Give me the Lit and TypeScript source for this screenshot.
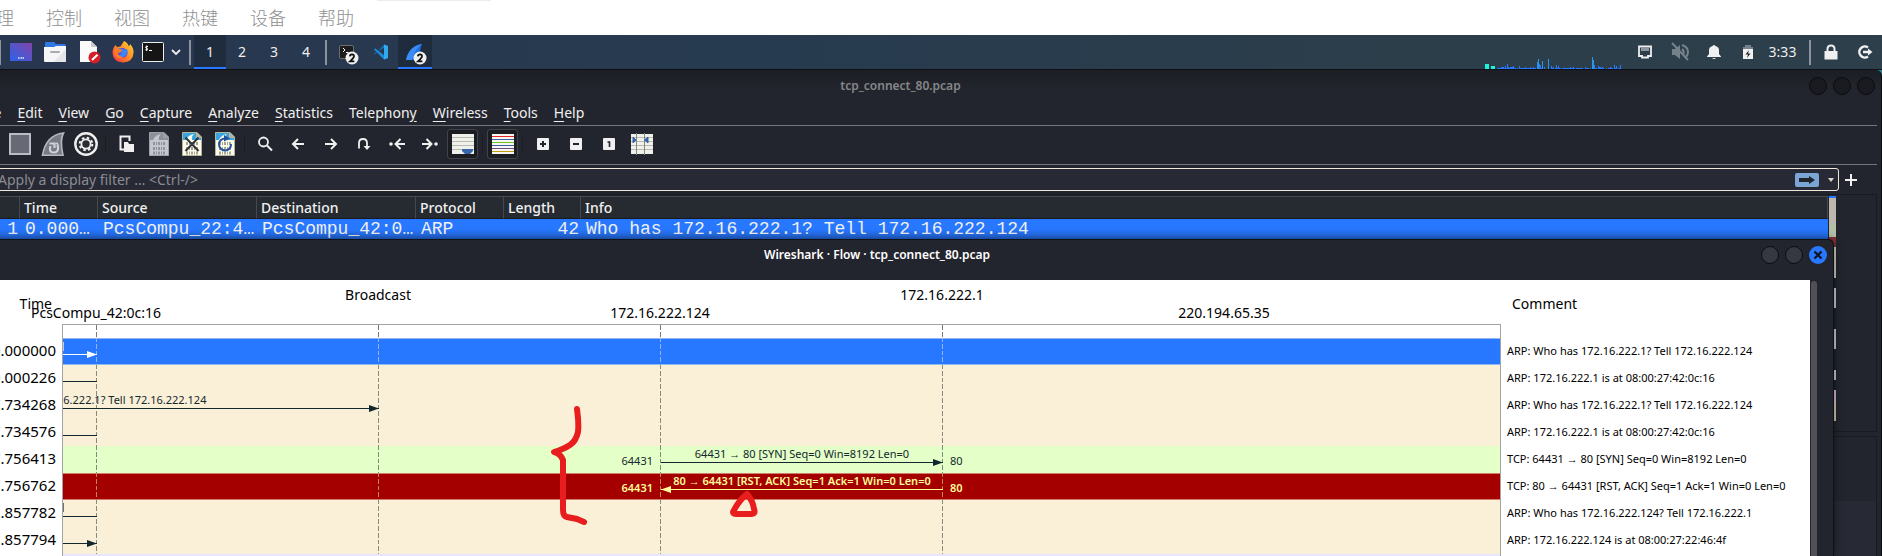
import { LitElement, html, css, svg } from "lit";
import { customElement } from "lit/decorators.js";
import { classMap } from "lit/directives/class-map.js";

/* ---------- icons ---------- */
const icon = (w: number, h: number, body: unknown) =>
  html`<svg width=${w} height=${h} viewBox="0 0 ${w} ${h}" fill="none" overflow="visible" aria-hidden="true">${body}</svg>`;

const bits = (c: string) => svg`<g stroke=${c} stroke-width="3" stroke-dasharray="2 1 1 1 2 1 1 1">
  <path d="M4 11.500H16M4 16.500H16M4 21H16"/></g>`;
const sheet = (fill: string, top: string, edge: string) => svg`
  <path d="M.5.500H15L19.500 5V23.500H.5Z" fill=${fill} stroke=${edge}/>
  <path d="M1 1H14.500L16 5 19 6V8H10L9 6 7 8H1Z" fill=${top}/>
  <path d="M4 8Q6 3 12 2 9 5 10 8Z" fill=${fill}/>
  <path d="M14.500 1V5.500H19.500Z" stroke=${edge} fill=${edge}/>`;
const badge2 = svg`<circle cx="17" cy="16" r="6.500" fill="#f0f0f0"/>
  <path d="M14.800 14.300Q15 12.300 17 12.300 19.200 12.400 19 14.500 18.600 16.300 15 19.300H19.400" stroke="#111" stroke-width="1.700"/>`;

const I = {
  desktop: icon(24, 24, svg`<defs><linearGradient id="dg" x1="0" y1="1" x2="1" y2="0"><stop stop-color="#2a63ea"/><stop offset="1" stop-color="#8244a8"/></linearGradient></defs>
    <rect x="1" y="3" width="22" height="18" rx="1" fill="url(#dg)"/><path d="M9 18H11M11.500 18H13M13.500 18H15.500" stroke="#e8e8ff" stroke-width="1.500" stroke-dasharray="1.500 .5"/>`),
  folder: icon(24, 24, svg`<path d="M2 9V3Q2 2 3 2H11Q12 2 12.500 4H21.500Q22.500 4 22.500 5V9Z" fill="#2f77e6"/>
    <path d="M1 7H11L13 6H23V21Q23 22 22 22H2Q1 22 1 21Z" fill="#f5f5f7"/><path d="M23 9L11 22H22Q23 22 23 21Z" fill="#e4e4e8"/><path d="M8 12H16" stroke="#aaa" stroke-width="2" stroke-linecap="round"/>`),
  doc: icon(24, 24, svg`<path d="M3 1H14L20 7V22H3Z" fill="#fafafa"/><path d="M14 1V7H20Z" fill="#c9c9cc"/>
    <circle cx="17.500" cy="17.500" r="6" fill="#d42127"/><path d="M15 20L20.500 14.800" stroke="#fff" stroke-width="2"/>`),
  firefox: icon(24, 24, svg`<defs><linearGradient id="ff" x1="1" y1="0" x2="0" y2="1"><stop stop-color="#ffd93c"/><stop offset=".5" stop-color="#ff8a25"/><stop offset="1" stop-color="#f0264f"/></linearGradient></defs>
    <path d="M13 1Q17 3 17.500 6 19 6 19 4 23 8 22.500 13 22 22 12 22.500 2 22 1.500 13 1.500 8 4.500 5L6 7 9.500 6.500Q11 4 13 1Z" fill="url(#ff)"/>
    <circle cx="11.500" cy="13" r="5" fill="#7a42c9"/><path d="M7 12Q6 8 9 8 12 10 16 9 18 13 14 16 10 19 7 15 10 15 11 13Z" fill="#3a86f5"/>
    <path d="M4 8Q7 8 11 10 10 13 6.500 13 8 17 13 17 6 21 3 14Z" fill="#ff7a22"/>`),
  terminal: icon(24, 24, svg`<rect x="1.500" y="2.500" width="21" height="19" rx="1" fill="#151515" stroke="#f0f0f0"/>
    <path d="M7 6.500Q4.500 6 4.500 7.300 5 8.300 6.500 8.700 7 10.500 4.300 9.800M5.700 5.500V11M8 10.500H11" stroke="#fff"/>`),
  chevron: icon(12, 12, svg`<path d="M2 4L6 8 10 4" stroke="#eee" stroke-width="1.800"/>`),
  termSmall: icon(26, 24, svg`<g transform="translate(4 2)"><rect x="1.500" y="3.500" width="14" height="13" rx="1.500" fill="#1d1d1f" stroke="#6c6c70"/><path d="M5 6L7 8 5 10M8 10.500H10.500" stroke="#fff"/><g transform="translate(-3 0)">${badge2}</g></g>`),
  vscode: icon(18, 18, svg`<path d="M12 1.500L16 3V15L12 16.500 2 6.500 3 5.300 12 12Z" fill="#1b8ad6"/><path d="M12 1.500L3 11.500 2 10.500 12 5Z" fill="#1072b4"/><path d="M12 1.500L16 3V15L12 16.500Z" fill="#33a9f2"/>`),
  shark: icon(24, 24, svg`<g transform="translate(0 2)"><path d="M3 18Q6 4 19 2 16 8 17 18Z" fill="#1c6fe8"/><path d="M3 18Q6 4 19 2 11 8 9 18Z" fill="#3b8cf5"/>${badge2}</g>`),
  net: icon(16, 16, svg`<path d="M2 2.500H14V12H11V13.500H5V12H2Z" stroke="#eee" stroke-width="1.800"/><path d="M5 4V7M7 4V7M9 4V7M11 4V7" stroke="#eee"/>`),
  mute: icon(20, 20, svg`<path d="M2 7H5L10 3V17L5 13H2Z" fill="#76828b"/><path d="M12 3Q18 5 18 10 18 13 16 15M12 7Q14.500 9 13.500 12M2 1L18 18" stroke="#76828b" stroke-width="2"/>`),
  bell: icon(16, 16, svg`<path d="M1 12.500L3 10V6Q3 3 6.500 2 8 0 9.500 2 13 3 13 6V10L15 12.500V13H1ZM6 14H10Q8 16 6 14Z" fill="#f0f0f0"/>`),
  battery: icon(12, 16, svg`<path d="M3 1H9V3H11V5H1V3H3Z" fill="#76828b"/><path d="M1 5H11V15H1Z" fill="#f0f0f0"/><path d="M7 6L3.500 10.500H6L5 14 8.500 9.500H6Z" fill="#222"/>`),
  lock: icon(14, 16, svg`<path d="M.5 7H13.500V15.500H.5Z" fill="#f0f0f0"/><path d="M3.500 8V5Q3.500 1.500 7 1.500T10.500 5V8" stroke="#f0f0f0" stroke-width="2"/>`),
  logout: icon(16, 16, svg`<path d="M11 3.500A5.500 5.500 0 1 0 11 12.500M6 8H13" stroke="#f0f0f0" stroke-width="2.400"/><path d="M11 4.500L15.500 8 11 11.500Z" fill="#f0f0f0"/>`),
  stop: icon(22, 22, svg`<rect x="1" y="1" width="20" height="20" fill="#676a74" stroke="#b9bcc5" stroke-width="2"/>`),
  fin: icon(24, 24, svg`<path d="M1.500 23.200Q5 3 22.500 1 18.500 8 22 23.200Z" fill="#777b85" stroke="#b4b7bf" stroke-width="1.600"/><path d="M8.500 11.500H13.500V16M9.500 14Q7.500 20.500 12.500 20.500T17 15.500 15.500 12" stroke="#d0d2d8" stroke-width="2.200"/>`),
  gear: icon(24, 24, svg`<circle cx="12" cy="12" r="10.700" fill="#2a2c33" stroke="#f0f0ee" stroke-width="2.400"/><circle cx="12" cy="12" r="4.600" stroke="#f0f0ee" stroke-width="1.800"/><circle cx="12" cy="12" r="6.300" stroke="#f0f0ee" stroke-width="2" stroke-dasharray="2.500 2.450"/>`),
  open: icon(16, 18, svg`<path d="M6 14.500H2.500V1.500H11.500V6" stroke="#f0f0f0" stroke-width="2"/><path d="M6 7H10L11 9H16V17H6Z" fill="#f0f0f0"/>`),
  save: icon(20, 24, svg`${sheet("#c3c6cd", "#8d9099", "#9da0a8")}${bits("#8f929a")}`),
  close: icon(20, 24, svg`${sheet("#fdfcea", "#38a4e0", "#b5b49f")}${bits("#a5a594")}<path d="M3.500 5.500L16.500 19M16.500 5.500L3.500 19" stroke="#2d3339" stroke-width="2"/>`),
  reload: icon(20, 24, svg`${sheet("#fdfcea", "#38a4e0", "#b5b49f")}${bits("#a5a594")}<path d="M10.500 6.500A6 6 0 1 0 16 12" stroke="#25539b" stroke-width="2"/><path d="M9 3L15 6.500 9 9.500Z" fill="#25539b"/>`),
  search: icon(16, 16, svg`<circle cx="6.500" cy="6" r="4.500" stroke="#f0f0f0" stroke-width="1.800"/><path d="M10 9.500L15 14.500" stroke="#f0f0f0" stroke-width="2"/>`),
  left: icon(14, 14, svg`<path d="M13 7H2.500M7 2L2 7 7 12" stroke="#f0f0f0" stroke-width="2"/>`),
  right: icon(14, 14, svg`<path d="M1 7H11.500M7 2L12 7 7 12" stroke="#f0f0f0" stroke-width="2"/>`),
  jump: icon(14, 14, svg`<path d="M2 11.500V6Q2 2 6 2T10 6V10" stroke="#f0f0f0" stroke-width="1.800"/><path d="M6.500 9H13.500L10 13Z" fill="#f0f0f0"/>`),
  first: icon(18, 14, svg`<circle cx="3" cy="7" r="1.800" fill="#f0f0f0"/><path d="M17 7H8.500M12.500 2L7.500 7 12.500 12" stroke="#f0f0f0" stroke-width="2"/>`),
  last: icon(18, 14, svg`<circle cx="15" cy="7" r="1.800" fill="#f0f0f0"/><path d="M1 7H9.500M5.500 2L10.500 7 5.500 12" stroke="#f0f0f0" stroke-width="2"/>`),
  scroll: icon(22, 20, svg`<rect width="22" height="20" fill="#f1f1ec"/><path d="M0 3.500H22M0 7.500H22M0 11.500H22M0 15.500H22" stroke="#b9bab4"/><path d="M10 15H21V17L18 20H13L10 17Z" fill="#3566a8"/>`),
  colors: icon(22, 20, svg`<rect width="22" height="20" fill="#f6f6f2"/><path d="M0 2.500H22" stroke="#e8262a"/><path d="M0 5.500H22" stroke="#3d5f9f"/><path d="M0 8.500H22" stroke="#6cc61a"/><path d="M0 11.500H22" stroke="#3d5f9f"/><path d="M0 14.500H22" stroke="#6f4a7e"/><path d="M0 17.500H22" stroke="#c39a12"/>`),
  zoomIn: icon(12, 12, svg`<rect width="12" height="12" rx="1" fill="#f0f0f0"/><path d="M3 6H9M6 3V9" stroke="#22242c" stroke-width="2"/>`),
  zoomOut: icon(12, 12, svg`<rect width="12" height="12" rx="1" fill="#f0f0f0"/><path d="M3 6H9" stroke="#22242c" stroke-width="2"/>`),
  zoomOne: icon(12, 12, svg`<rect width="12" height="12" rx="1" fill="#f0f0f0"/><path d="M4.500 4H6.500V9" stroke="#22242c" stroke-width="1.600"/>`),
  cols: icon(22, 22, svg`<rect y="1" width="22" height="20" fill="#f1f1ec"/><path d="M0 4.500H22M0 8.500H22M0 12.500H22M0 16.500H22" stroke="#b9bab4"/><path d="M5.500 0V22M13.500 0V22" stroke="#858680"/><path d="M2 4L5 7 2 10ZM17 4L13.500 7 17 10Z" fill="#3566a8" stroke="#3566a8"/>`),
  apply: icon(24, 14, svg`<rect width="24" height="14" rx="2" fill="#7aa5d4"/><path d="M4 5H14V3L20 7 14 11V9H4Z" fill="#20242c"/>`),
  caret: icon(8, 6, svg`<path d="M1 1H7L4 5Z" fill="#d8d8d2"/>`),
  plus: icon(14, 14, svg`<path d="M1 7H13M7 1V13" stroke="#f0f0f0" stroke-width="2"/>`),
  x: icon(18, 18, svg`<path d="M5.500 5.500L12.500 12.500M12.500 5.500L5.500 12.500" stroke="#0e1420" stroke-width="2.200"/>`),
};

/* ---------- host and desktop bars ---------- */
@customElement("host-menu")
class HostMenu extends LitElement {
  static styles = css`
    :host { display: block; background: #fff; overflow: hidden; }
    .bar { display: flex; gap: 32px; height: 35px; box-sizing: border-box; margin-left: -22px; padding-bottom: 2px; align-items: center; }
    .item { all: unset; font: 300 18px/26px "Noto Sans CJK SC", sans-serif; color: #8f8f8f; white-space: nowrap; }
  `;
  render() {
    return html`<nav class="bar">
      ${["管理", "控制", "视图", "热键", "设备", "帮助"].map((t) => html`<button class="item">${t}</button>`)}
    </nav>`;
  }
}

@customElement("desktop-panel")
class DesktopPanel extends LitElement {
  static styles = css`
    :host { display: block; font-family: "Noto Sans", sans-serif; }
    .bar { display: flex; height: 34px; background: linear-gradient(90deg, #28364f, #273b50 40%, #2c3e4a 75%, #2d3f4b); border-bottom: 1px solid #0e1015; align-items: stretch; }
    .btn { all: unset; box-sizing: border-box; width: 34px; display: flex; align-items: center; justify-content: center; color: #eee; font-size: 14px; }
    .space { width: 32px; padding-bottom: 2px; }
    .slim { width: 26px; }
    .chev { width: 20px; }
    .on { background: #1f2c3d; border-bottom: 2px solid #2777ff; padding-top: 2px; }
    .sep { width: 2px; height: 25px; margin: 5px 3px 0; background: #8b939c; }
    .edge { margin-left: 0; width: 1px; }
    .grow { flex: 1; }
    .graph { align-self: flex-end; margin-right: 2px; display: block; }
    .clock { width: 35px; padding-bottom: 2px; display: flex; align-items: center; justify-content: center; font-size: 14px; color: #eee; }
    .wide { width: 36px; }
    .gap { margin-left: 9px; margin-right: 3px; }
  `;
  render() {
    const bars = [1,1,1,1,2,2,2,1,3,1,5,2,1,2,2,2,3,1,1,0,1,0,3,1,1,1,1,1,2,1,1,1,1,2,1,1,2,1,1,0,7,10,5,4,1,8,0,2,0,0,0,10,0,0,3,1,2,0,1,4,1,3,1,1,0,1,1,1,1,1,1,1,1,2,1,1,2,1,0,1,1,1,1,1,1,1,0,0,2,1,1,1,0,1,0,12,9,4,1,1,0,3,2,2,1,2,1,0,0,1,0,1,1,2,1,1,0,4,1,3,0,1,1,4];
    return html`<div class="bar">
      <span class="sep edge"></span>
      <button class="btn" aria-label="Show desktop">${I.desktop}</button>
      <button class="btn" aria-label="Files">${I.folder}</button>
      <button class="btn" aria-label="Editor">${I.doc}</button>
      <button class="btn" aria-label="Firefox">${I.firefox}</button>
      <button class="btn slim" aria-label="Terminal">${I.terminal}</button>
      <button class="btn chev" aria-label="More terminals">${I.chevron}</button>
      <span class="sep"></span>
      ${[1, 2, 3, 4].map((n) => html`<button class=${classMap({ btn: true, space: true, on: n === 1 })}>${n}</button>`)}
      <span class="sep"></span>
      <button class="btn" aria-label="Terminal windows">${I.termSmall}</button>
      <button class="btn" aria-label="Code">${I.vscode}</button>
      <button class="btn on" aria-label="Wireshark windows">${I.shark}</button>
      <span class="grow"></span>
      <svg class="graph" width="140" height="16" aria-hidden="true">
        <path d="M0 11H4V16H0ZM6 13H10V16H6Z" fill="#1cf3dc"/>
        ${bars.map((v, i) => (v ? svg`<rect x=${12 + i} y=${16 - v} width="1" height=${v} fill=${v > 5 ? "#2b96e8" : "#2777ff"}/>` : ""))}
      </svg>
      <button class="btn wide" aria-label="Network">${I.net}</button>
      <button class="btn" aria-label="Volume muted">${I.mute}</button>
      <button class="btn" aria-label="Notifications">${I.bell}</button>
      <button class="btn" aria-label="Battery">${I.battery}</button>
      <span class="clock">3:33</span>
      <span class="sep gap"></span>
      <button class="btn" aria-label="Lock">${I.lock}</button>
      <button class="btn" aria-label="Log out">${I.logout}</button>
    </div>`;
  }
}

/* ---------- main capture window ---------- */
@customElement("capture-window")
class CaptureWindow extends LitElement {
  static styles = css`
    :host { display: flex; flex-direction: column; flex: 1; font-family: "Noto Sans", sans-serif; color: #f0f0f0; background: linear-gradient(#1c1e24, #23252e 20px); margin-left: -80px; border-right: 1px solid #0d0e12; border-radius: 0 6px 0 0; }
    .title { display: grid; grid-template-columns: 1fr auto 1fr; align-items: center; height: 32px; padding: 0 6px; }
    .name { grid-column: 2; font: 600 12px/18px "Noto Sans", sans-serif; color: #868789; }
    .dots { justify-self: end; display: flex; gap: 6px; }
    .dot { all: unset; box-sizing: border-box; width: 18px; height: 18px; border-radius: 50%; background: #1a1b20; border: 1px solid #0b0c0f; }
    .menu { display: flex; height: 21px; padding: 0 0 2px 59px; gap: 16px; align-items: center; border-bottom: 1px solid #75757d; margin-right: 4px; }
    .entry { all: unset; font-size: 14px; line-height: 20px; white-space: nowrap; }
    u { text-underline-offset: 3px; }
    .tools { display: flex; height: 36px; padding: 0 0 2px 83px; align-items: center; border-bottom: 1px solid #75757d; margin-right: 4px; }
    .tool { all: unset; box-sizing: border-box; width: 33px; height: 30px; display: flex; align-items: center; justify-content: center; }
    .pressed { width: 31px; margin: 0 1px; border: 1px solid #41434b; border-radius: 3px; background: #1b1d22; }
    .split { width: 1px; height: 18px; margin: 0 3px; background: #1c1d24; }
    .filter { display: flex; align-items: center; gap: 5px; padding: 3px 23px 0 0; }
    .box { flex: 1; display: flex; align-items: center; height: 23px; box-sizing: border-box; border: 1px solid #efe9dc; border-radius: 3px; background: #272935; padding: 0 3px 0 77px; gap: 8px; }
    .field { all: unset; flex: 1; font-size: 14px; }
    .field::placeholder { color: #8b8c91; }
    .small { all: unset; display: flex; }
    .list { display: flex; height: 236px; margin: 3px 4px 0 0; border: solid #1a1b20; border-width: 1px 1px 1px 0; }
    .scroll { flex: 1; padding-top: 1px; }
    table { border-collapse: separate; border-spacing: 0; table-layout: fixed; width: 100%; }
    .c1 { width: 100px; } .c2 { width: 78px; } .c3 { width: 159px; } .c4 { width: 88px; } .c5 { width: 77px; }
    th { box-sizing: border-box; height: 23px; padding: 0 0 0 4px; text-align: left; font: 500 14px/20px "Noto Sans", sans-serif; background: linear-gradient(#272b32, #252a31); border-top: 1px solid #46484e; border-right: 1px solid #46484e; border-bottom: 1px solid #181a1f; }
    td { height: 20px; padding: 0 0 0 5px; font: 18px/20px "Liberation Mono", monospace; white-space: nowrap; overflow: hidden; }
    .row { background: linear-gradient(#2777ff 50%, #2268dd); }
    .num { text-align: right; padding: 0 2px 0 0; }
    .map { width: 7px; margin: 1px 40px 0 1px; }
    .seg { display: block; }
    .details { flex: 1; margin: 4px 4px 0 0; border: solid #1a1b20; border-width: 1px 1px 0 0; background: linear-gradient(#23252e 64px, #272935 64px); }
  `;
  render() {
    const menus = [["", "F", "ile"], ["", "E", "dit"], ["", "V", "iew"], ["", "G", "o"], ["", "C", "apture"], ["", "A", "nalyze"], ["", "S", "tatistics"], ["Telephon", "y", ""], ["", "W", "ireless"], ["", "T", "ools"], ["", "H", "elp"]];
    const tool = (label: string, pic: unknown, pressed = false) =>
      html`<button class=${classMap({ tool: true, pressed })} aria-label=${label}>${pic}</button>`;
    const split = html`<span class="split"></span>`;
    const map: [number, string][] = [[2, "#2777ff"], [27, "#bdb8ae"], [12, "#b2c0a6"], [10, "#863136"], [31, "#d3cdc4"], [10, "#14242a"], [20, "#cccce4"], [21, "#14242a"], [20, "#cccce4"], [21, "#14242a"], [10, "#cccce4"], [10, "#14242a"], [12, "#d9bbdc"], [19, "#d6cdb8"]];
    return html`
      <header class="title"><span class="name">tcp_connect_80.pcap</span>
        <span class="dots"><button class="dot" aria-label="Minimize"></button><button class="dot" aria-label="Maximize"></button><button class="dot" aria-label="Close"></button></span>
      </header>
      <nav class="menu">${menus.map(([a, b, c]) => html`<button class="entry">${a}<u>${b}</u>${c}</button>`)}</nav>
      <div class="tools">
        ${tool("Stop", I.stop)}${tool("Restart", I.fin)}${tool("Options", I.gear)}${split}
        ${tool("Open", I.open)}${tool("Save", I.save)}${tool("Close file", I.close)}${tool("Reload", I.reload)}${split}
        ${tool("Find", I.search)}${tool("Back", I.left)}${tool("Forward", I.right)}${tool("Go to packet", I.jump)}${tool("First", I.first)}${tool("Last", I.last)}
        ${tool("Auto scroll", I.scroll, true)}${split}${tool("Colorize", I.colors, true)}${split}
        ${tool("Zoom in", I.zoomIn)}${tool("Zoom out", I.zoomOut)}${tool("Normal size", I.zoomOne)}${tool("Resize columns", I.cols)}
      </div>
      <div class="filter">
        <div class="box"><input class="field" aria-label="Display filter" placeholder="Apply a display filter … &lt;Ctrl-/&gt;">
          <button class="small" aria-label="Apply">${I.apply}</button><button class="small" aria-label="History">${I.caret}</button></div>
        <button class="small" aria-label="Add filter">${I.plus}</button>
      </div>
      <div class="list">
        <div class="scroll"><table>
          <colgroup><col class="c1"><col class="c2"><col class="c3"><col class="c3"><col class="c4"><col class="c5"><col></colgroup>
          <thead><tr><th>No.</th><th>Time</th><th>Source</th><th>Destination</th><th>Protocol</th><th>Length</th><th>Info</th></tr></thead>
          <tbody><tr class="row"><td class="num">1</td><td>0.000…</td><td>PcsCompu_22:4…</td><td>PcsCompu_42:0…</td><td>ARP</td><td class="num">42</td><td>Who has 172.16.222.1? Tell 172.16.222.124</td></tr></tbody>
        </table></div>
        <div class="map">${map.map(([h, c]) => html`<span class="seg" style="height:${h}px;background:${c}"></span>`)}</div>
      </div>
      <div class="details"></div>`;
  }
}

/* ---------- flow dialog ---------- */
interface Flow { time: string; kind: string; comment: string; from: number; to: number; label?: string; ports?: [string, string]; }
const FLOWS: Flow[] = [
  { time: "0.000000", kind: "sel", comment: "ARP: Who has 172.16.222.1? Tell 172.16.222.124", from: -248, to: 34 },
  { time: "0.000226", kind: "arp", comment: "ARP: 172.16.222.1 is at 08:00:27:42:0c:16", from: 34, to: -248 },
  { time: "7.734268", kind: "arp", comment: "ARP: Who has 172.16.222.1? Tell 172.16.222.124", from: -248, to: 316, label: "Who has 172.16.222.1? Tell 172.16.222.124" },
  { time: "7.734576", kind: "arp", comment: "ARP: 172.16.222.1 is at 08:00:27:42:0c:16", from: 34, to: -248 },
  { time: "7.756413", kind: "syn", comment: "TCP: 64431 → 80 [SYN] Seq=0 Win=8192 Len=0", from: 598, to: 880, label: "64431 → 80 [SYN] Seq=0 Win=8192 Len=0", ports: ["64431", "80"] },
  { time: "7.756762", kind: "rst", comment: "TCP: 80 → 64431 [RST, ACK] Seq=1 Ack=1 Win=0 Len=0", from: 880, to: 598, label: "80 → 64431 [RST, ACK] Seq=1 Ack=1 Win=0 Len=0", ports: ["64431", "80"] },
  { time: "12.857782", kind: "arp", comment: "ARP: Who has 172.16.222.124? Tell 172.16.222.1", from: 34, to: -248 },
  { time: "12.857794", kind: "arp", comment: "ARP: 172.16.222.124 is at 08:00:27:22:46:4f", from: -248, to: 34 },
];
const LIFELINES = [34, 316, 598, 880];
const INK: Record<string, string> = { sel: "#ffffff", arp: "#12272e", syn: "#12272e", rst: "#fffc9c" };
const DASH: Record<string, string> = { sel: "#93b5ea", arp: "#858b80", syn: "#7b8e78", rst: "#b98a5c" };

@customElement("flow-window")
class FlowWindow extends LitElement {
  static styles = css`
    :host { display: flex; flex-direction: column; box-sizing: border-box; font-family: "Noto Sans", sans-serif; color: #000; background: #23252e; border: 1px solid #101116; border-bottom: 0; border-radius: 6px 6px 0 0; box-shadow: 0 0 8px #0008; overflow: hidden; }
    .title { flex: none; display: grid; grid-template-columns: 1fr auto 1fr; align-items: start; height: 34px; padding: 6px 6px 0 6px; }
    .name { grid-column: 2; font: 600 12px/18px "Noto Sans", sans-serif; color: #fff; }
    .dots { justify-self: end; display: flex; gap: 6px; }
    .dot { all: unset; box-sizing: border-box; width: 18px; height: 18px; border-radius: 50%; background: #353841; border: 1px solid #0b0c0f; }
    .close { background: #2777ff; border: 0; }
    .body { flex: 1; min-height: 0; display: flex; padding-right: 16px; }
    .sheet { flex: 1; display: grid; grid-template-columns: 141px 1fr 309px; background: #fff; align-content: start; }
    .bar { width: 6px; margin: 1px 0 0 1px; border-radius: 3px 3px 0 0; background: #505156; }
    .head { height: 44px; box-sizing: border-box; position: relative; font-size: 14px; line-height: 18px; }
    .time-h { text-align: right; padding: 15px 10px 0 0; }
    .note-h { padding: 15px 0 0 11px; }
    .node { position: absolute; transform: translateX(-50%); top: 6px; white-space: nowrap; }
    .low { top: 24px; }
    .times { padding-top: 13px; }
    .time { height: 27px; line-height: 27px; font-size: 15px; text-align: right; padding-right: 6px; }
    .notes { padding-top: 13px; }
    .note { height: 27px; line-height: 27px; font-size: 11px; padding-left: 6px; white-space: nowrap; }
    .graph { position: relative; overflow: hidden; border: solid #a2a3a5; border-width: 1px 1px 0 1px; padding-top: 13px; }
    .lane { position: relative; height: 27px; box-sizing: border-box; }
    .sel { background: #2777ff; border: solid #8fb8f2; border-width: 1px 0; color: #fff; }
    .arp { background: #faefd7; color: #12272e; }
    .syn { background: #e4ffc7; color: #12272e; }
    .rst { background: #a40000; border: solid #cf7f6c; border-width: 1px 0; color: #fffc9c; font-weight: 600; }
    .next { background: #e7e6ff; }
    .label, .port { position: absolute; font-size: 11px; line-height: 14px; white-space: nowrap; }
    .label { top: 1px; transform: translateX(-50%); }
    .port { top: 8px; }
    .rst .label { top: 0; }
    .rst .port { top: 7px; }
    .before { transform: translateX(-100%); }
    .lines { position: absolute; left: 0; top: 0; }
  `;
  render() {
    const nodes: [number, string][] = [[34, "PcsCompu_42:0c:16"], [316, "Broadcast"], [598, "172.16.222.124"], [880, "172.16.222.1"], [1162, "220.194.65.35"]];
    const top = (i: number) => 13 + i * 27;
    return html`
      <header class="title"><span class="name">Wireshark · Flow · tcp_connect_80.pcap</span>
        <span class="dots"><button class="dot" aria-label="Minimize"></button><button class="dot" aria-label="Maximize"></button><button class="dot close" aria-label="Close">${I.x}</button></span>
      </header>
      <div class="body">
        <div class="sheet">
          <div class="head time-h">Time</div>
          <div class="head">${nodes.map(([x, t], i) => html`<span class=${classMap({ node: true, low: i % 2 === 0 })} style="left:${x}px">${t}</span>`)}</div>
          <div class="head note-h">Comment</div>
          <div class="times">${FLOWS.map((f) => html`<div class="time">${f.time}</div>`)}</div>
          <div class="graph">
            ${FLOWS.map((f) => html`<div class="lane ${f.kind}">
              ${f.label ? html`<span class="label" style="left:${(f.from + f.to) / 2}px">${f.label}</span>` : ""}
              ${f.ports ? html`<span class="port before" style="left:590px">${f.ports[0]}</span><span class="port" style="left:887px">${f.ports[1]}</span>` : ""}
            </div>`)}
            <div class="lane next"></div>
            <svg class="lines" width="1300" height="256" aria-hidden="true">
              ${LIFELINES.map((x) => svg`<path d="M${x - 0.5} 0V13" stroke="#77787a" stroke-dasharray="5 2"/>
                ${FLOWS.map((f, i) => svg`<path d="M${x - 0.5} ${top(i)}v27" stroke=${DASH[f.kind]} stroke-dasharray="4 2 5 2"/>`)}`)}
              ${FLOWS.map((f, i) => {
                const y = top(i) + 16.5, d = f.to > f.from ? -10 : 10, ink = INK[f.kind];
                return svg`<path d="M${f.from} ${y}H${f.to}" stroke=${ink}/><path d="M${f.to} ${y}l${d} -3.500v7Z" fill=${ink}/>`;
              })}
              <path d="M.5 17V26" stroke="#b5cdf5"/><path d="M.5 178V187" stroke="#6c7470"/>
            </svg>
          </div>
          <div class="notes">${FLOWS.map((f) => html`<div class="note">${f.comment}</div>`)}</div>
        </div>
        <div class="bar"></div>
      </div>`;
  }
}

@customElement("app-root")
class AppRoot extends LitElement {
  static styles = css`
    :host { display: flex; flex-direction: column; position: relative; height: 100vh; overflow: hidden; background: #2c7f8c; }
    .flow { position: absolute; top: 239px; bottom: 0; left: -80px; right: 48px; }
    .tip { position: absolute; top: 0; left: 377px; width: 114px; height: 1px; background: #ececec; }
    .pen { position: absolute; left: 545px; top: 400px; }
  `;
  render() {
    return html`
      <host-menu></host-menu>
      <div class="tip"></div>
      <desktop-panel></desktop-panel>
      <capture-window></capture-window>
      <flow-window class="flow"></flow-window>
      <svg class="pen" width="220" height="130" fill="none" stroke="#e81e1e" stroke-width="6" stroke-linecap="round" stroke-linejoin="round" aria-hidden="true">
        <path d="M32 9Q34 24 33 32 31 41 25 45 19 49 9 52 15 53 18 60V110Q18 116 22 117L32 119 39 122"/>
        <path d="M202 94Q194 100 188 112 188 114 192 114H206Q211 114 209 109 208 101 202 94Z"/>
      </svg>`;
  }
}
